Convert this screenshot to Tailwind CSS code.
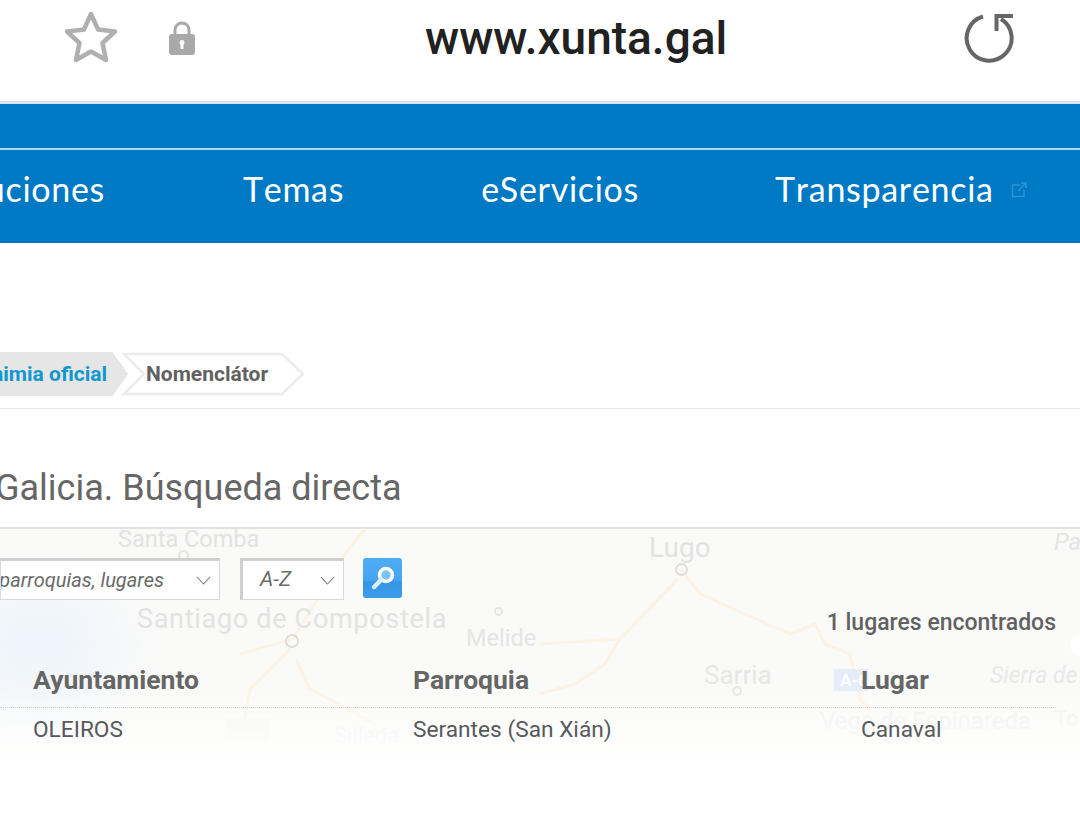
<!DOCTYPE html>
<html lang="es">
<head>
<meta charset="UTF-8">
<title>Nomenclátor</title>
<script src="https://cdn.jsdelivr.net/npm/@tailwindcss/browser@4"></script>
</head>
<body class="bg-white font-['Roboto',sans-serif] text-[#58595b] overflow-hidden">
<div class="w-[1080px] h-[838px] overflow-hidden">

  <!-- browser bar -->
  <header class="h-[104px] border-b-[3px] border-[#d8e6f1] flex items-center pb-[26px]">
    <svg class="ml-[63px] w-[56px] h-[56px]" viewBox="0 0 56 56" fill="none" stroke="#b0b0b0" stroke-width="4.500" stroke-linejoin="round"><path d="M28 4 L35 19.500 L52 21.500 L39.500 33 L43 50 L28 41.500 L13 50 L16.500 33 L4 21.500 L21 19.500 Z"/></svg>
    <svg class="ml-[49px] w-[28px] h-[36px]" viewBox="0 0 28 36"><path d="M7 16 V10 a7 7 0 0 1 14 0 V16" fill="none" stroke="#a9a9a9" stroke-width="3"/><rect x="1" y="14" width="26" height="21" rx="3" fill="#a9a9a9"/><path d="M14 20 a2.500 2.500 0 0 1 1.500 4.500 V29 h-3 v-4.500 A2.500 2.500 0 0 1 14 20 Z" fill="#fff"/></svg>
    <div class="ml-[229px] text-[46px] leading-none font-medium text-[#212121] w-[420px]">www.xunta.gal</div>
    <svg class="ml-[118px] w-[54px] h-[54px]" viewBox="0 0 54 54" fill="none" stroke="#666" stroke-width="4"><path d="M20 5.500 A22.500 22.500 0 1 0 38 8"/><path d="M33.500 20 V5 H50" stroke-linejoin="miter"/></svg>
  </header>

  <!-- site nav -->
  <div class="h-[44px] bg-[#0079c4]"></div>
  <div class="h-[2px] bg-[#a9dcf2]"></div>
  <nav class="h-[93px] bg-[#0079c4] border-b border-[#0073ba] flex items-center text-white font-['Lato',sans-serif] text-[34px] tracking-[0.7px] [font-kerning:none] pb-[16px] whitespace-nowrap">
    <span class="w-[105px] flex justify-end overflow-hidden"><span>uciones</span></span>
    <span class="ml-[138px]">Temas</span>
    <span class="ml-[137px]">eServicios</span>
    <span class="ml-[136px]">Transparencia</span>
    <svg class="ml-[17px] mt-[4px] w-[16px] h-[16px]" viewBox="0 0 16 16" fill="none" stroke="#2b95d8" stroke-width="1.500"><path d="M9 3 H1.500 V14.500 H13 V8"/><path d="M7 9 L14.500 1.500 M10 1 H15 V6"/></svg>
  </nav>

  <!-- breadcrumb -->
  <div class="h-[166px] border-b border-[#e9e9e9] flex items-end pb-[12px]">
    <div class="h-[44px] w-[128px] bg-[#e6e6e6] [clip-path:polygon(0_0,88%_0,100%_50%,88%_100%,0_100%)] flex items-center justify-end pr-[21px] pt-[1px] text-[21px] font-bold text-[#1197d0] whitespace-nowrap overflow-hidden">nimia oficial</div>
    <div class="relative -ml-[6px] h-[44px] w-[185px] flex items-center pl-[24px] pt-[1px] text-[21px] font-bold text-[#616161]">
      <svg class="absolute inset-0" width="185" height="44" viewBox="0 0 185 44" fill="#fff" stroke="#ececec" stroke-width="2.500"><path d="M2 2 H160 L181 22 L160 42 H2 L22 22 Z"/></svg>
      <span class="relative">Nomenclátor</span>
    </div>
  </div>

  <!-- title -->
  <h1 class="h-[120px] border-b-2 border-[#e2e2e2] pt-[57px] -ml-[5px] pl-[0px] text-[36px] leading-[44px] font-normal text-[#666] whitespace-nowrap">Galicia. Búsqueda directa</h1>

  <!-- map with form and results on top -->
  <section class="relative h-[309px] overflow-hidden">
    <div class="absolute inset-x-0 top-0 h-[240px] bg-[#fafaf8]">
      <div class="absolute -left-[80px] top-[10px] w-[240px] h-[210px] rounded-full bg-[radial-gradient(closest-side,#edf4fc,transparent)]"></div>
      <svg class="absolute inset-0" width="1080" height="240" fill="none" stroke="#fcf3e5" stroke-width="3">
        <path d="M365 0 L345 25 L293 110 L240 125 M290 120 L250 160 L245 190 M296 130 L310 160 L375 195"/>
        <path d="M681 40 L700 65 L790 105 L815 95 L825 115 L850 125 L860 170 L870 182"/>
        <path d="M678 50 L620 110 L540 115 M620 110 L605 135 L575 155 L540 165"/>
      </svg>
      <div class="absolute left-[834px] top-[140px] w-[34px] h-[22px] bg-[#e6edf8] text-white text-[17px] leading-[22px] font-bold pl-[6px]">A-6</div>
      <div class="absolute left-[225px] top-[190px] w-[44px] h-[20px] bg-[#f5f7f3]"></div>
      <div class="absolute left-[675px] top-[34px] w-[13px] h-[13px] rounded-full border-[2.500px] border-[#dcdcdc]"></div>
      <div class="absolute left-[285px] top-[105px] w-[14px] h-[14px] rounded-full border-[2.500px] border-[#dcdcdc]"></div>
      <div class="absolute left-[178px] top-[21px] w-[11px] h-[11px] rounded-full border-2 border-[#e3e3e3]"></div>
      <div class="absolute left-[494px] top-[78px] w-[9px] h-[9px] rounded-full border-2 border-[#e5e5e5]"></div>
      <div class="absolute left-[732px] top-[157px] w-[10px] h-[10px] rounded-full border-2 border-[#e7e7e7]"></div>
      <div class="absolute left-[1070px] top-[105px] w-[22px] h-[22px] rounded-full bg-white"></div>
      <span class="absolute left-[118px] -top-[7px] text-[23.500px] text-[#e3e3e3]">Santa Comba</span>
      <span class="absolute left-[649px] -top-[2px] text-[28px] text-[#e2e2e2]">Lugo</span>
      <span class="absolute left-[137px] top-[70px] text-[27px] tracking-[0.7px] text-[#e3e3e3]">Santiago de Compostela</span>
      <span class="absolute left-[466px] top-[92px] text-[23.500px] text-[#e5e5e5]">Melide</span>
      <span class="absolute left-[704px] top-[127px] text-[26px] text-[#e7e7e7]">Sarria</span>
      <span class="absolute left-[990px] top-[130px] text-[23px] italic text-[#e9e9e9]">Sierra de</span>
      <span class="absolute left-[1054px] -top-[5px] text-[24px] italic text-[#e5e5e5]">Pa</span>
      <span class="absolute left-[820px] top-[174px] text-[24px] text-[#f0f0f0]">Vega de Espinareda</span>
      <span class="absolute left-[1054px] top-[173px] text-[22px] text-[#f0f0f0]">To</span>
      <span class="absolute left-[334px] top-[190px] text-[22px] text-[#f2f2f2]">Silleda</span>
      <div class="absolute inset-x-0 bottom-0 h-[80px] bg-gradient-to-b from-white/0 to-white"></div>
    </div>

    <div class="relative pt-[29px] flex items-start">
      <div class="w-[220px] h-[42px] bg-white border border-[#d9d9d9] border-t-[3px] border-t-[#cfcfcf] flex items-center justify-end gap-[7px] pr-[8px] text-[20px] italic text-[#6a6a6a] whitespace-nowrap overflow-hidden">
        <span class="mr-[25px]">parroquias, lugares</span>
        <svg class="w-[15px] h-[9px] shrink-0" viewBox="0 0 17 10" fill="none" stroke="#808080" stroke-width="1.200"><path d="M1 1 L8.500 9 L16 1"/></svg>
      </div>
      <div class="ml-[20px] w-[104px] h-[42px] bg-white border border-[#d9d9d9] border-t-[3px] border-t-[#cfcfcf] border-l-[3px] border-l-[#cfcfcf] flex items-center justify-between pl-[17px] pr-[8px] text-[21px] italic text-[#6a6a6a]">
        <span>A-Z</span>
        <svg class="w-[15px] h-[9px]" viewBox="0 0 17 10" fill="none" stroke="#808080" stroke-width="1.200"><path d="M1 1 L8.500 9 L16 1"/></svg>
      </div>
      <div class="ml-[19px] w-[39px] h-[40px] rounded-[3px] bg-[linear-gradient(#4fadf3,#45a5f0_55%,#3795e6_60%,#3d9bea)] flex items-center justify-center">
        <svg class="w-[26px] h-[26px]" viewBox="0 0 26 26" fill="none" stroke="#fff"><circle cx="16" cy="10" r="6.500" fill="#7cc3f5" stroke-width="3.500"/><path d="M11 15 L4 22" stroke="#dcefff" stroke-width="4.500" stroke-linecap="round"/></svg>
      </div>
    </div>

    <p class="relative mt-[9px] pr-[24px] text-right text-[23px] leading-[28px] font-medium text-[#616161]">1 lugares encontrados</p>

    <div class="relative mt-[28px] grid grid-cols-[413px_420px_1fr] w-[1056px] text-[26.500px] leading-[29px] font-bold text-[#666] h-[43px] border-b border-dotted border-[#d0d0d0]">
      <span class="pl-[33px]">Ayuntamiento</span>
      <span>Parroquia</span>
      <span class="pl-[28px]">Lugar</span>
    </div>
    <div class="relative grid grid-cols-[413px_420px_1fr] w-[1056px] pt-[8px] text-[22.700px] leading-[28px] text-[#58595b]">
      <span class="pl-[33px]">OLEIROS</span>
      <span>Serantes (San Xián)</span>
      <span class="pl-[28px]">Canaval</span>
    </div>
  </section>
</div>
</body>
</html>
